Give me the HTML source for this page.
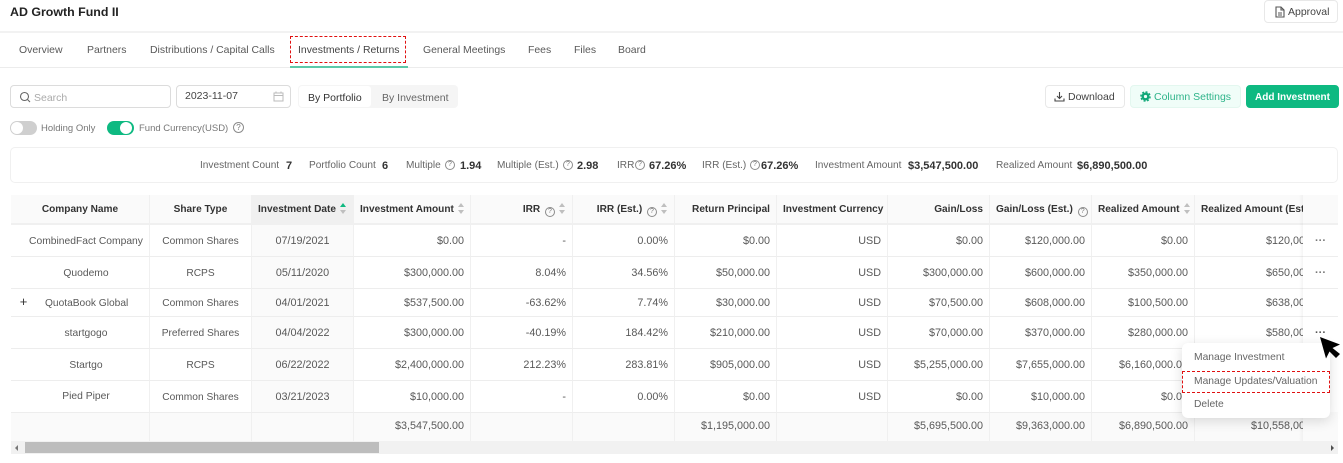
<!DOCTYPE html>
<html><head><meta charset="utf-8">
<style>
*{box-sizing:border-box}
html,body{margin:0;padding:0;background:#fff}
body{width:1343px;height:463px;position:relative;overflow:hidden;font-family:"Liberation Sans",sans-serif;font-size:11px;color:#595959}
.a{position:absolute}
.t{position:absolute;white-space:nowrap;line-height:14px}
.tab{position:absolute;top:44px;white-space:nowrap;line-height:14px;font-size:10.45px;color:#595959}
.btn{position:absolute;border:1px solid #e8e8e8;border-radius:4px;background:#fff;line-height:23px;font-size:10.5px;white-space:nowrap;color:#434343}
.s{position:absolute;top:159px;white-space:nowrap;line-height:14px;color:#666;font-size:10.1px}
.b{position:absolute;top:159px;white-space:nowrap;line-height:14px;font-weight:bold;color:#333}
.q{display:inline-block;width:10px;height:10px;border:1px solid #8c8c8c;border-radius:50%;font-size:7px;line-height:8px;text-align:center;color:#777;font-weight:normal;vertical-align:-1px}
.q.a2{position:absolute}
#wrap{position:absolute;left:11px;top:195px;width:1292px;height:246px;overflow:hidden}
table{border-collapse:separate;border-spacing:0;table-layout:fixed;width:1322px}
td,th{padding:0 6px;white-space:nowrap;overflow:hidden;border-right:1px solid #f0f0f0;border-bottom:1px solid #ededed;font-size:10.8px;font-weight:normal;color:#595959;text-align:right}
th{height:30px;padding-top:1px;font-size:10.1px;line-height:14px;background:#fafafa;color:#333;font-weight:bold;border-bottom:2px solid #f0f0f0}
.c{text-align:center}
.l{text-align:left}
td.n{font-size:10.3px;text-align:center;padding-left:18px;padding-top:1px}
td.k{font-size:10.2px;text-align:center;padding-top:1px}
td.d{background:#fafafa;text-align:center}
th.d{background:#f0f0f0}
tr.f td{background:#fafafa;border-bottom:0;padding-bottom:3px}
.sort{display:inline-block;width:7px;height:11px;vertical-align:-2px;margin-left:4px;position:relative}
.sort:before{content:"";position:absolute;left:0;top:0;border:3.5px solid transparent;border-top:0;border-bottom:4px solid #bfbfbf}
.sort:after{content:"";position:absolute;left:0;bottom:0;border:3.5px solid transparent;border-bottom:0;border-top:4px solid #bfbfbf}
.sort.on:before{border-bottom-color:#10b981}
th .q{margin-left:2px}
.m{position:absolute;left:1194px;white-space:nowrap;line-height:14px;color:#666;font-size:10.3px}
</style></head><body>

<div class="t" style="left:10px;top:5px;font-size:12.4px;font-weight:bold;color:#222">AD Growth Fund II</div>
<div class="btn" style="left:1264px;top:0;width:74px;height:23px;padding-left:23px">Approval</div>
<svg class="a" style="left:1275px;top:6px" width="10" height="12" viewBox="0 0 10 12"><path d="M1 1h5l3 3v7H1z M6 1v3h3 M3 7h4 M3 9h4" fill="none" stroke="#555" stroke-width="1.1"/></svg>

<div class="a" style="left:0;top:31px;width:1343px;height:2px;background:#f2f2f2"></div>
<div class="a" style="left:0;top:67px;width:1343px;height:1px;background:#ececec"></div>

<div class="tab" style="left:19px">Overview</div>
<div class="tab" style="left:87px">Partners</div>
<div class="tab" style="left:150px">Distributions / Capital Calls</div>
<div class="tab" style="left:298px;color:#444">Investments / Returns</div>
<div class="tab" style="left:423px">General Meetings</div>
<div class="tab" style="left:528px">Fees</div>
<div class="tab" style="left:574px">Files</div>
<div class="tab" style="left:618px">Board</div>
<div class="a" style="left:290px;top:66px;width:118px;height:2px;background:#5cc8a8"></div>
<div class="a" style="left:290px;top:36px;width:116px;height:27px;border:1px dashed #e01010"></div>

<div class="a" style="left:10px;top:85px;width:161px;height:23px;border:1px solid #dcdcdc;border-radius:4px"></div>
<svg class="a" style="left:19px;top:91px" width="12" height="12" viewBox="0 0 12 12"><circle cx="5.5" cy="5.5" r="4" fill="none" stroke="#666" stroke-width="1.1"/><path d="M8.5 8.5l2.5 2.5" stroke="#666" stroke-width="1.1"/></svg>
<div class="t" style="left:34px;top:91px;color:#aaa;font-size:10.5px">Search</div>
<div class="a" style="left:176px;top:85px;width:115px;height:23px;border:1px solid #dcdcdc;border-radius:4px"></div>
<div class="t" style="left:185px;top:89px;color:#444;font-size:10.5px">2023-11-07</div>
<svg class="a" style="left:273px;top:91px" width="11" height="11" viewBox="0 0 11 11"><path d="M1 2h9v8H1z M1 4.5h9 M3 .5v2 M8 .5v2" fill="none" stroke="#bbb"/></svg>
<div class="a" style="left:298px;top:85px;width:160px;height:23px;background:#f5f5f5;border-radius:4px"></div>
<div class="a" style="left:299px;top:86px;width:72px;height:21px;background:#fff;border-radius:3px"></div>
<div class="t" style="left:308px;top:91px;color:#333;font-size:10.5px">By Portfolio</div>
<div class="t" style="left:382px;top:91px;color:#666;font-size:10.5px">By Investment</div>

<div class="btn" style="left:1045px;top:85px;width:80px;height:23px;padding-left:22px">Download</div>
<svg class="a" style="left:1054px;top:91px" width="11" height="11" viewBox="0 0 11 11"><path d="M5.5 1v6 M3 5l2.5 2.5L8 5 M1 7.5V10h9V7.5" fill="none" stroke="#444" stroke-width="1.1"/></svg>
<div class="btn" style="left:1130px;top:85px;width:111px;height:23px;padding-left:23px;background:#f0fdf8;border-color:#e3f7ef;color:#2fb48a">Column Settings</div>
<svg class="a" style="left:1140px;top:91px" width="11" height="11" viewBox="0 0 11 11"><circle cx="5.5" cy="5.5" r="2.8" fill="none" stroke="#10a878" stroke-width="2.4"/><circle cx="5.5" cy="5.5" r="4.6" fill="none" stroke="#10a878" stroke-width="1.4" stroke-dasharray="2 1.6"/></svg>
<div class="btn" style="left:1246px;top:85px;width:93px;height:23px;background:#0eb981;border-color:#0eb981;color:#fff;font-weight:bold;font-size:10px;text-align:center">Add Investment</div>

<div class="a" style="left:10px;top:121px;width:27px;height:14px;border-radius:7px;background:#cfcfcf"></div>
<div class="a" style="left:11px;top:122px;width:12px;height:12px;border-radius:50%;background:#fff"></div>
<div class="t" style="left:41px;top:122px;font-size:9.5px;color:#777">Holding Only</div>
<div class="a" style="left:107px;top:121px;width:27px;height:14px;border-radius:7px;background:#0eb981"></div>
<div class="a" style="left:120px;top:122px;width:12px;height:12px;border-radius:50%;background:#fff"></div>
<div class="t" style="left:139px;top:122px;font-size:9.5px;color:#777">Fund Currency(USD)</div>
<span class="q a2" style="left:233px;top:122px;width:11px;height:11px;line-height:9px;font-size:8px">?</span>

<div class="a" style="left:10px;top:147px;width:1328px;height:36px;border:1px solid #f0f0f0;border-radius:5px"></div>
<div class="s" style="left:200px">Investment Count</div><div class="b" style="left:286px">7</div>
<div class="s" style="left:309px">Portfolio Count</div><div class="b" style="left:382px">6</div>
<div class="s" style="left:406px">Multiple</div><span class="q a2" style="left:445px;top:160px">?</span><div class="b" style="left:460px">1.94</div>
<div class="s" style="left:497px">Multiple (Est.)</div><span class="q a2" style="left:563px;top:160px">?</span><div class="b" style="left:577px">2.98</div>
<div class="s" style="left:617px">IRR</div><span class="q a2" style="left:635px;top:160px">?</span><div class="b" style="left:649px">67.26%</div>
<div class="s" style="left:702px">IRR (Est.)</div><span class="q a2" style="left:750px;top:160px">?</span><div class="b" style="left:761px">67.26%</div>
<div class="s" style="left:815px">Investment Amount</div><div class="b" style="left:908px">$3,547,500.00</div>
<div class="s" style="left:996px">Realized Amount</div><div class="b" style="left:1077px">$6,890,500.00</div>

<div id="wrap">
<table>
<colgroup><col style="width:139px"><col style="width:102px"><col style="width:102px"><col style="width:117px"><col style="width:102px"><col style="width:102px"><col style="width:102px"><col style="width:111px"><col style="width:102px"><col style="width:102px"><col style="width:103px"><col style="width:138px"></colgroup>
<tr><th class="c">Company Name</th><th class="c">Share Type</th><th class="d c">Investment Date<span class="sort on"></span></th><th class="l">Investment Amount<span class="sort"></span></th><th>IRR <span class="q">?</span><span class="sort"></span></th><th>IRR (Est.) <span class="q">?</span><span class="sort"></span></th><th>Return Principal</th><th>Investment Currency</th><th>Gain/Loss</th><th>Gain/Loss (Est.) <span class="q">?</span></th><th>Realized Amount<span class="sort"></span></th><th class="l">Realized Amount (Est.)</th></tr>
<tr style="height:32px"><td class="n">CombinedFact Company</td><td class="k">Common Shares</td><td class="d">07/19/2021</td><td>$0.00</td><td>-</td><td>0.00%</td><td>$0.00</td><td>USD</td><td>$0.00</td><td>$120,000.00</td><td>$0.00</td><td>$120,000.00</td></tr>
<tr style="height:32px"><td class="n">Quodemo</td><td class="k">RCPS</td><td class="d">05/11/2020</td><td>$300,000.00</td><td>8.04%</td><td>34.56%</td><td>$50,000.00</td><td>USD</td><td>$300,000.00</td><td>$600,000.00</td><td>$350,000.00</td><td>$650,000.00</td></tr>
<tr style="height:28px"><td style="padding-left:34px;padding-top:1px;text-align:left;font-size:10.2px">QuotaBook Global</td><td class="k">Common Shares</td><td class="d">04/01/2021</td><td>$537,500.00</td><td>-63.62%</td><td>7.74%</td><td>$30,000.00</td><td>USD</td><td>$70,500.00</td><td>$608,000.00</td><td>$100,500.00</td><td>$638,000.00</td></tr>
<tr style="height:32px"><td class="n">startgogo</td><td class="k">Preferred Shares</td><td class="d">04/04/2022</td><td>$300,000.00</td><td>-40.19%</td><td>184.42%</td><td>$210,000.00</td><td>USD</td><td>$70,000.00</td><td>$370,000.00</td><td>$280,000.00</td><td>$580,000.00</td></tr>
<tr style="height:32px"><td class="n">Startgo</td><td class="k">RCPS</td><td class="d">06/22/2022</td><td>$2,400,000.00</td><td>212.23%</td><td>283.81%</td><td>$905,000.00</td><td>USD</td><td>$5,255,000.00</td><td>$7,655,000.00</td><td>$6,160,000.00</td><td>$8,560,000.00</td></tr>
<tr style="height:32px"><td class="n" style="padding-top:0">Pied Piper</td><td class="k">Common Shares</td><td class="d">03/21/2023</td><td>$10,000.00</td><td>-</td><td>0.00%</td><td>$0.00</td><td>USD</td><td>$0.00</td><td>$10,000.00</td><td>$0.00</td><td>$10,000.00</td></tr>
<tr class="f" style="height:29px"><td></td><td></td><td></td><td>$3,547,500.00</td><td></td><td></td><td>$1,195,000.00</td><td></td><td>$5,695,500.00</td><td>$9,363,000.00</td><td>$6,890,500.00</td><td>$10,558,000.00</td></tr>
</table>
</div>

<div class="a" style="left:1299px;top:195px;width:4px;height:246px;background:linear-gradient(90deg,rgba(0,0,0,0),rgba(0,0,0,.04))"></div>
<div class="a" style="left:1303px;top:195px;width:35px;height:246px;background:#fff"></div>
<div class="a" style="left:1303px;top:195px;width:35px;height:30px;background:#fafafa;border-bottom:2px solid #f0f0f0"></div>
<div class="a" style="left:1303px;top:256px;width:35px;height:1px;background:#ededed"></div>
<div class="a" style="left:1303px;top:288px;width:35px;height:1px;background:#ededed"></div>
<div class="a" style="left:1303px;top:316px;width:35px;height:1px;background:#ededed"></div>
<div class="a" style="left:1303px;top:412px;width:35px;height:29px;background:#fafafa"></div>
<div class="t" style="left:1315px;top:234px;font-weight:bold;color:#777">···</div>
<div class="t" style="left:1315px;top:266px;font-weight:bold;color:#777">···</div>
<div class="t" style="left:1315px;top:326px;font-weight:bold;color:#555">···</div>

<div class="a" style="left:18px;top:296px;width:11px;height:11px;color:#333;font-size:13px;line-height:11px;text-align:center">+</div>

<div class="a" style="left:11px;top:441px;width:1327px;height:13px;background:#f1f1f1"></div>
<div class="a" style="left:25px;top:442px;width:354px;height:11px;background:#bdbdbd"></div>
<div class="a" style="left:15px;top:445px;border:3px solid transparent;border-left:0;border-right:3px solid #777"></div>
<div class="a" style="left:1331px;top:445px;border:3px solid transparent;border-right:0;border-left:3px solid #505050"></div>

<div class="a" style="left:1182px;top:343px;width:148px;height:75px;background:#fff;border-radius:6px;box-shadow:0 3px 12px rgba(0,0,0,.14)"></div>
<div class="m" style="top:351px">Manage Investment</div>
<div class="m" style="top:375px">Manage Updates/Valuation</div>
<div class="m" style="top:398px">Delete</div>
<div class="a" style="left:1182px;top:371px;width:148px;height:22px;border:1px dashed #e01010"></div>

<svg class="a" style="left:1318px;top:335px" width="24" height="25" viewBox="0 0 24 25"><path d="M2 2L22 9.5L14.5 13L22 19L18 23L11.5 16.5L8 23.5Z" fill="#000"/></svg>

</body></html>
